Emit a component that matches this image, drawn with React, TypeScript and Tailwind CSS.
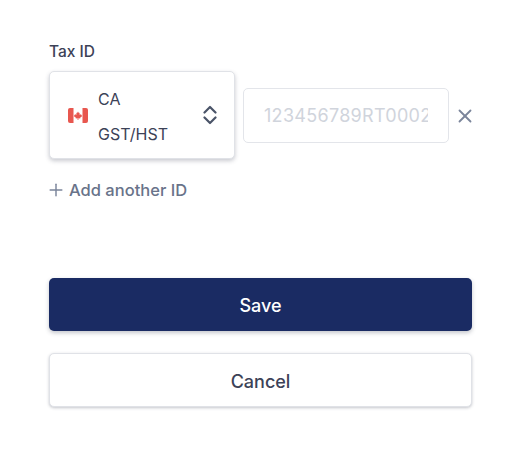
import { Plus, X } from 'lucide-react';

function CanadaFlag() {
  return (
    <svg width="20" height="15" viewBox="0 0 20 15" className="shrink-0">
      <rect width="20" height="15" rx="2" fill="#ffffff" />
      <path d="M2 0h3.500v15H2a2 2 0 0 1-2-2V2a2 2 0 0 1 2-2z" fill="#e8574f" />
      <path d="M18 0h-3.500v15H18a2 2 0 0 0 2-2V2a2 2 0 0 0-2-2z" fill="#e8574f" />
      <path d="M10 3.500l.9 1.600.8-.4-.3 2 1.100-.6.300.8 1.200-.2-.4 1.300.5.300-2 1.500.2.800-1.900-.3V12h-.8v-1.700l-1.900.3.200-.8-2-1.500.5-.3-.4-1.300 1.200.2.300-.8 1.100.6-.3-2 .8.400z" fill="#e8574f" />
    </svg>
  );
}

function Chevrons() {
  return (
    <svg width="14" height="20" viewBox="0 0 14 20" fill="none" stroke="#4a5468" strokeWidth="2.200" strokeLinecap="round" strokeLinejoin="round">
      <path d="M1.500 7.500L7 2l5.500 5.500" />
      <path d="M1.500 12.500L7 18l5.500-5.500" />
    </svg>
  );
}

export default function App() {
  return (
    <div className="w-[525px] h-[475px] bg-white overflow-hidden pl-[49px] pr-[53px] pt-[42px] font-['Inter',sans-serif]">
      <div className="text-[15.500px] leading-[20px] font-medium text-[#3c4257] h-[20px] mb-[9px]">Tax ID</div>

      {/* Tax id row */}
      <div className="flex items-center">
        <div className="w-[186px] h-[88px] shrink-0 flex items-center bg-white rounded-[5px] border border-[#e0e2e7] shadow-[0_2px_4px_rgba(60,66,87,0.28)] pl-[18px] pr-[17px]">
          <CanadaFlag />
          <div className="flex-1 ml-[10px] pt-[3px] text-[16px] leading-[35px] text-[#3c4257]">
            <div>CA</div>
            <div>GST/HST</div>
          </div>
          <Chevrons />
        </div>
        <div className="ml-[8px] w-[206px] h-[55px] shrink-0 rounded-[5px] border border-[#e3e5ea] bg-white pl-[20px] pr-[20px] flex items-center overflow-hidden">
          <input
            readOnly
            placeholder="123456789RT0002"
            className="w-full text-[18px] tracking-[0.3px] bg-transparent outline-none placeholder:text-[#d0d4dc]"
          />
        </div>
        <X size={22} strokeWidth={2} className="shrink-0 ml-[5px] -mr-[4px] mt-[2px] text-[#7b859b]" />
      </div>

      <div className="flex items-center mt-[21px] h-[20px] text-[#69738a]">
        <Plus size={20} strokeWidth={1.75} className="-ml-[3px] text-[#7b859b]" />
        <span className="ml-[3px] text-[16.500px] font-medium">Add another ID</span>
      </div>

      <button className="mt-[78px] w-full h-[53px] pt-[1px] rounded-[5px] bg-[#1a2b63] text-white text-[18px] font-medium shadow-[0_2px_4px_rgba(60,66,87,0.3)] block">
        Save
      </button>
      <button className="mt-[22px] w-full h-[54px] pt-[2px] rounded-[5px] bg-white border border-[#e0e2e7] text-[#3c4257] text-[18px] font-medium shadow-[0_1px_3px_rgba(60,66,87,0.3)] block">
        Cancel
      </button>
    </div>
  );
}
